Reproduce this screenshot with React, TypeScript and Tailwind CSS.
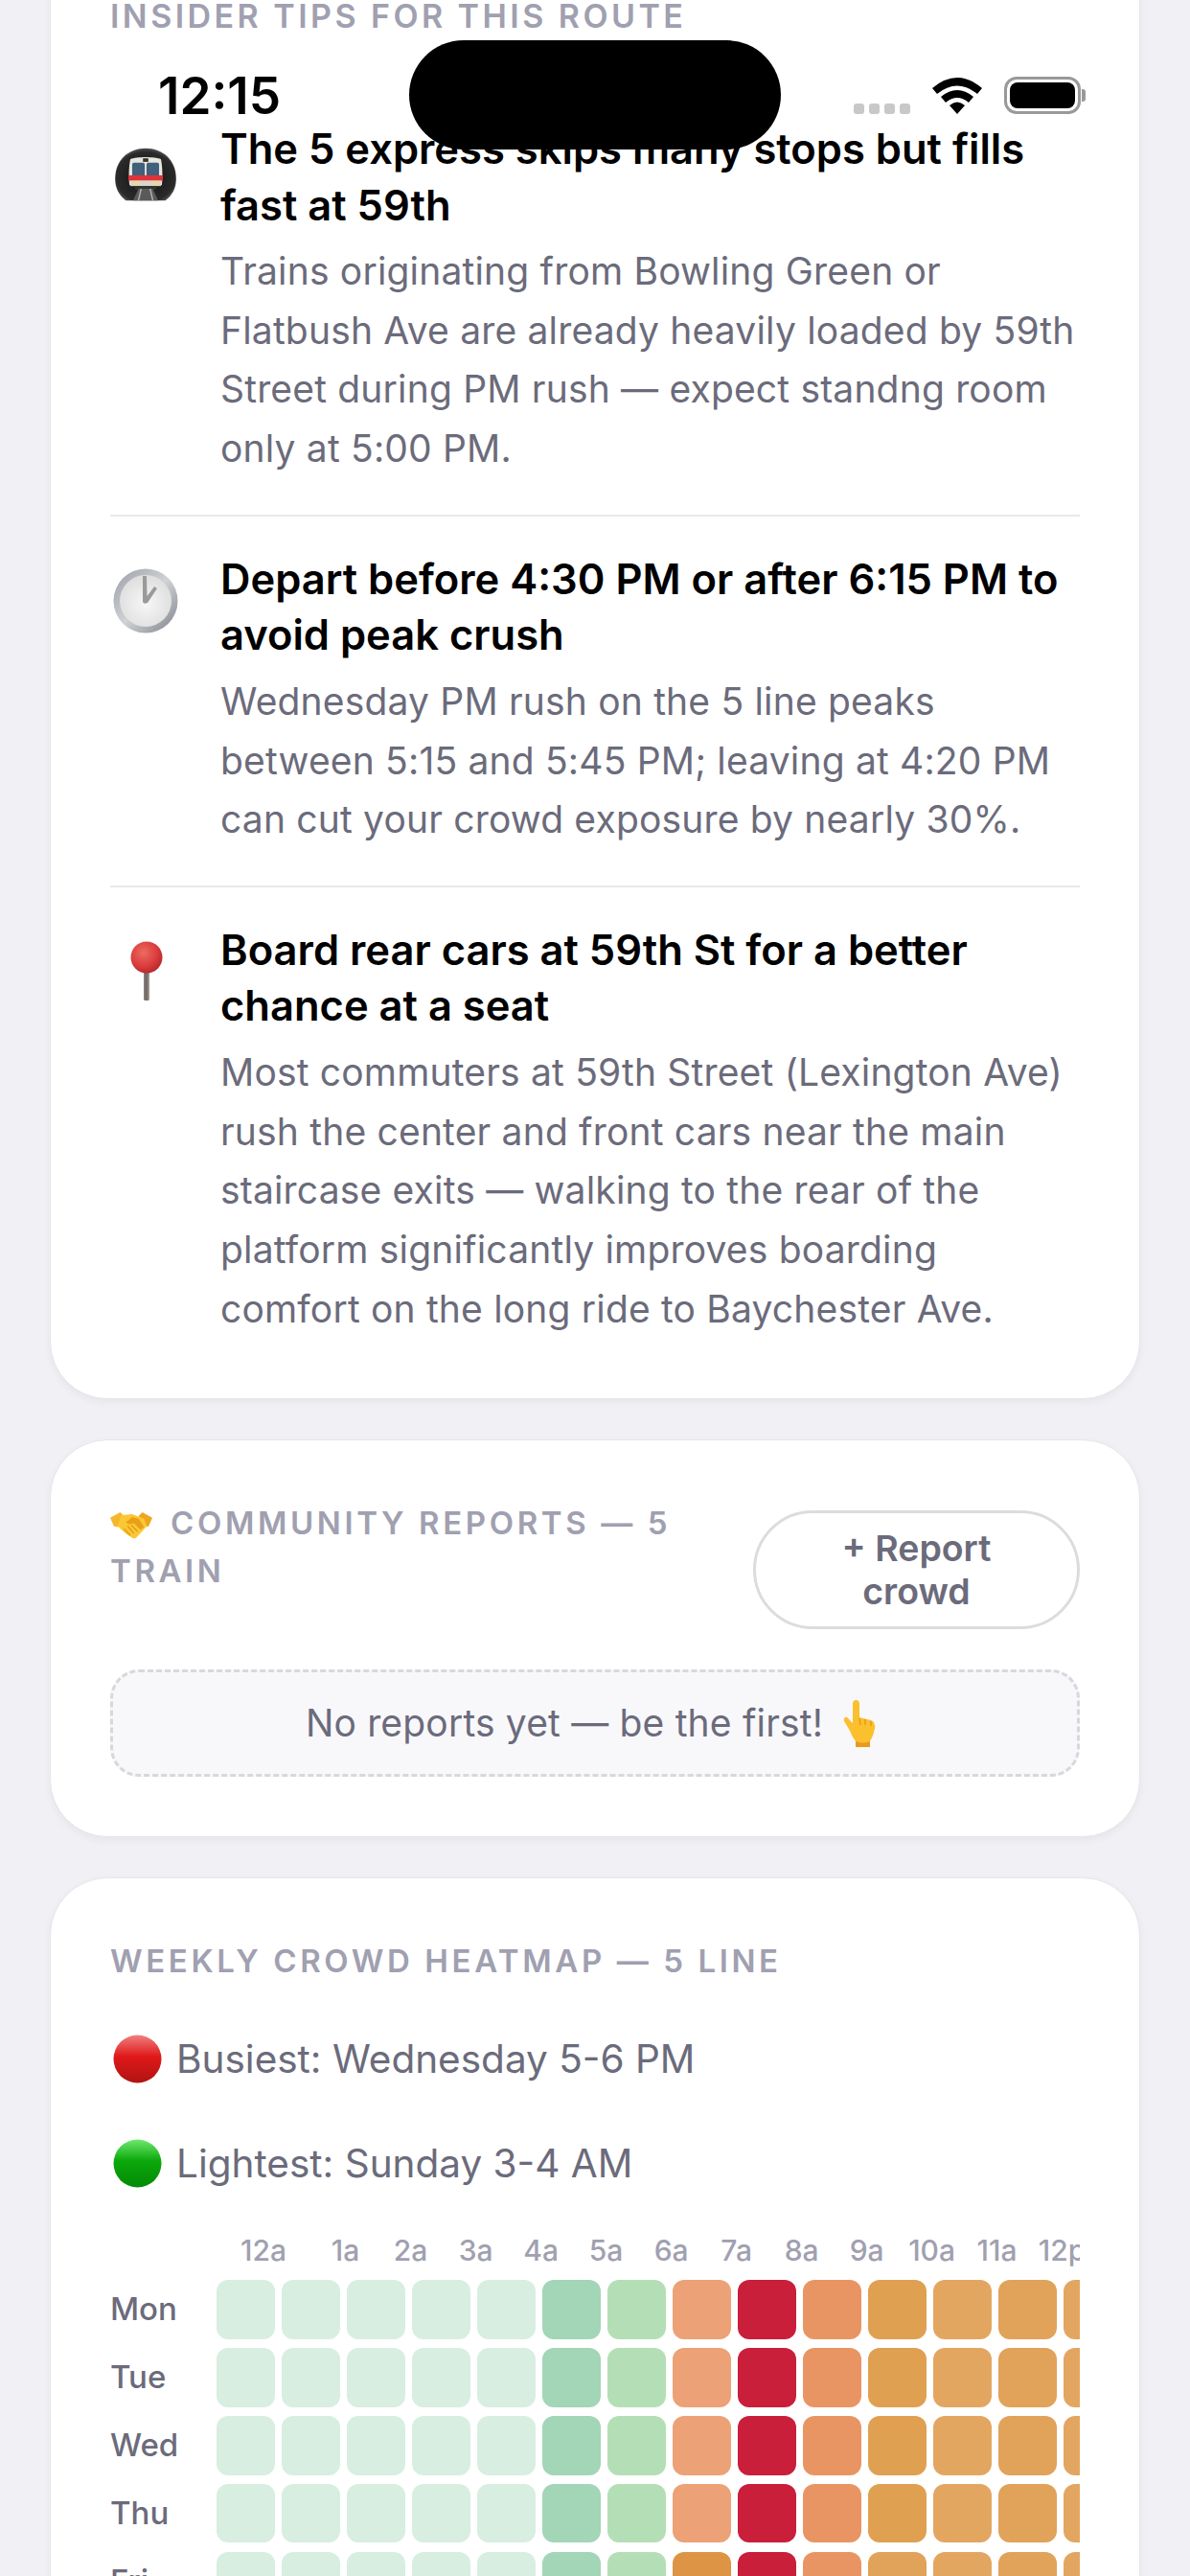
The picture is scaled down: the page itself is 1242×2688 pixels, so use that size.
import React from "react";

const font = { fontFamily: "Inter, 'Noto Sans', sans-serif" };

function TrainEmoji() {
  return (
    <svg width="68" height="58" viewBox="0 0 72 62" className="block">
      <defs>
        <radialGradient id="tun" cx="50%" cy="55%" r="60%">
          <stop offset="0%" stopColor="#111" />
          <stop offset="80%" stopColor="#2a2a2a" />
          <stop offset="100%" stopColor="#6a6a6a" />
        </radialGradient>
      </defs>
      <path d="M2 36 C2 15 17 2 36 2 C55 2 70 15 70 36 C70 46 66 54 58 60 L14 60 C6 54 2 46 2 36 Z" fill="url(#tun)" />
      <path d="M19 14 C26 11 46 11 53 14 C55 22 55 36 54 43 L18 43 C17 36 17 22 19 14 Z" fill="#e8e6e0" />
      <rect x="21" y="18" width="14" height="16" rx="2" fill="#40607c" />
      <rect x="37" y="18" width="14" height="16" rx="2" fill="#40607c" />
      <rect x="33" y="13" width="6" height="4" fill="#3a3324" />
      <rect x="17" y="32" width="38" height="6" fill="#e0323c" />
      <rect x="19" y="38" width="34" height="6" fill="#d9d5c8" />
      <rect x="21" y="39" width="8" height="3" fill="#f2d98a" />
      <rect x="43" y="39" width="8" height="3" fill="#f2d98a" />
      <rect x="24" y="44" width="24" height="4" fill="#333" />
      <path d="M22 60 L28 47 L44 47 L50 60 Z" fill="#5a5a5a" />
      <path d="M28 60 L31 47 M44 60 L41 47" stroke="#b5b5b5" strokeWidth="1.5" />
    </svg>
  );
}

function ClockEmoji() {
  return (
    <svg width="68" height="68" viewBox="0 0 68 68" className="block">
      <defs>
        <linearGradient id="rim" x1="0" y1="0" x2="1" y2="1">
          <stop offset="0%" stopColor="#9a9ea6" />
          <stop offset="50%" stopColor="#d0d2d6" />
          <stop offset="100%" stopColor="#7e828a" />
        </linearGradient>
        <radialGradient id="face" cx="50%" cy="55%" r="55%">
          <stop offset="0%" stopColor="#f7f7f7" />
          <stop offset="100%" stopColor="#dedede" />
        </radialGradient>
      </defs>
      <circle cx="34" cy="34" r="33.5" fill="url(#rim)" />
      <circle cx="34" cy="34" r="27" fill="url(#face)" />
      <path d="M31 8 L35 8 L35.5 29 L43 19 L46 21 L36 36 Q32 38 31 35 Z" fill="#9a9a9a" />
    </svg>
  );
}

function PinEmoji() {
  return (
    <svg width="34" height="62" viewBox="0 0 34 62" className="block">
      <defs>
        <radialGradient id="ball" cx="40%" cy="35%" r="65%">
          <stop offset="0%" stopColor="#ec6b62" />
          <stop offset="70%" stopColor="#d93a3a" />
          <stop offset="100%" stopColor="#b92a2e" />
        </radialGradient>
        <linearGradient id="pin" x1="0" y1="0" x2="1" y2="0">
          <stop offset="0%" stopColor="#8a8480" />
          <stop offset="50%" stopColor="#6c6460" />
          <stop offset="100%" stopColor="#a8a4a0" />
        </linearGradient>
      </defs>
      <rect x="14" y="30" width="6" height="32" rx="1.5" fill="url(#pin)" />
      <circle cx="17" cy="17" r="16.5" fill="url(#ball)" />
    </svg>
  );
}

function HandshakeEmoji() {
  return (
    <svg width="44" height="29" viewBox="0 0 46 30" className="block">
      <path d="M0 7 L11 1 L15 5 L8 17 L4 16 Z" fill="#f6b62c" />
      <path d="M46 7 L35 1 L31 5 L38 17 L42 16 Z" fill="#eea61e" />
      <path d="M12 4 L24 3 L37 8 L40 16 L28 29 Q25 30 23 28 L18 25 L8 16 Z" fill="#fcc734" />
      <path d="M17 12 L24 6 L31 8 L37 17 L33 20 L26 13 L21 14 Z" fill="#e9a017" />
      <path d="M15 19 L22 26 M19 16 L26 24 M23 15 L30 22" stroke="#e09a18" strokeWidth="1.4" fill="none" />
    </svg>
  );
}

function FingerEmoji() {
  return (
    <svg width="38" height="49" viewBox="0 0 38 49" className="block">
      <path d="M11 4 Q11 0 14.5 0 Q18 0 18 4 L18 18 L30 21 Q35 23 34 30 L32 37 Q30 41 29 43 L29 49 L14 49 L14 43 Q10 38 8 32 L2 22 Q1 19 3 18 Q5 17 7 20 L11 24 Z" fill="#fbc02d" />
      <path d="M18 19 L19 26 M24 20 L24 26 M30 22 L30 27" stroke="#e49a18" strokeWidth="1.4" fill="none" />
      <path d="M14 43 Q22 46 29 43 L29 49 L14 49 Z" fill="#e89a1c" />
    </svg>
  );
}

function DotEmoji({ id, from, mid, to }: { id: string; from: string; mid: string; to: string }) {
  return (
    <svg width="51" height="51" viewBox="0 0 51 51" className="block shrink-0">
      <defs>
        <linearGradient id={id} x1="0" y1="0" x2="0" y2="1">
          <stop offset="0%" stopColor={from} />
          <stop offset="45%" stopColor={mid} />
          <stop offset="100%" stopColor={to} />
        </linearGradient>
      </defs>
      <circle cx="25.5" cy="25.5" r="25" fill={`url(#${id})`} />
    </svg>
  );
}

function StatusBar() {
  return (
    <div className="absolute left-0 top-0 w-full h-[160px]">
      <span className="absolute left-[165px] top-[70px] text-[53px] leading-[60px] font-semibold text-black">
        12:15
      </span>
      <div className="absolute left-[427px] top-[42px] w-[388px] h-[114px] rounded-[57px] bg-black" />
      <div className="absolute left-[891px] top-[108px] flex gap-[5px]">
        <div className="w-[11px] h-[11px] rounded-[3px] bg-[#c8c8c8]" />
        <div className="w-[11px] h-[11px] rounded-[3px] bg-[#c8c8c8]" />
        <div className="w-[11px] h-[11px] rounded-[3px] bg-[#c8c8c8]" />
        <div className="w-[11px] h-[11px] rounded-[3px] bg-[#c8c8c8]" />
      </div>
      <svg className="absolute left-[973px] top-[81px]" width="52" height="38" viewBox="0 0 52 38">
        <path d="M0 11 Q26 -11 52 11 L47 17 Q26 0 5 17 Z" fill="#000" />
        <path d="M9 20 Q26 6 43 20 L38 26 Q26 16 14 26 Z" fill="#000" />
        <path d="M18 29 Q26 22 34 29 L26 38 Z" fill="#000" />
      </svg>
      <div className="absolute left-[1048px] top-[80px] w-[80px] h-[39px] rounded-[13px] border-[3px] border-[#999] p-[3px]">
        <div className="w-full h-full rounded-[8px] bg-black" />
      </div>
      <div className="absolute left-[1129px] top-[93px] w-[4px] h-[13px] rounded-r-[3px] bg-[#999]" />
    </div>
  );
}

function Tip({ icon, title, body, last }: { icon: React.ReactNode; title: string; body: string; last?: boolean }) {
  return (
    <div className={last ? "flex" : "flex pb-[38px] mb-[36px] border-b-[2px] border-[#e8e8ec]"}>
      <div className="w-[115px] shrink-0 flex justify-start pl-[3px]">{icon}</div>
      <div className="flex-1">
        <div className="text-[43.5px] leading-[58.5px] font-semibold text-black">{title}</div>
        <div className="mt-[9px] text-[39px] leading-[61.7px] tracking-[0.18px] text-[#6b6b7b]">{body}</div>
      </div>
    </div>
  );
}

const G1 = "#d8eee1";
const G2 = "#a3d5b7";
const G3 = "#b4dfb6";
const P1 = "#eca176";
const R = "#c91f3b";
const P2 = "#e99563";
const O1 = "#e0a052";
const O2 = "#e3a661";
const O3 = "#e1a259";
const O4 = "#dd9445";

const baseRow = [G1, G1, G1, G1, G1, G2, G3, P1, R, P2, O1, O2, O3, O2];
const rows = [
  { day: "Mon", cells: baseRow },
  { day: "Tue", cells: baseRow },
  { day: "Wed", cells: baseRow },
  { day: "Thu", cells: baseRow },
  { day: "Fri", cells: [G1, G1, G1, G1, G1, G2, G3, O4, R, P2, O3, O2, O3, O2] },
];
const hours = ["1a", "2a", "3a", "4a", "5a", "6a", "7a", "8a", "9a", "10a", "11a", "12p"];

function Heatmap() {
  return (
    <div className="overflow-hidden">
      <div className="flex h-[36px] items-center pl-[136px] text-[30px] font-medium text-[#a0a0b0] whitespace-nowrap">
        <div className="w-[75.6px] shrink-0">12a</div>
        {hours.map((h) => (
          <div key={h} className="w-[68px] shrink-0 text-center">
            {h}
          </div>
        ))}
      </div>
      <div className="mt-[13px] flex flex-col gap-[9.3px]">
        {rows.map((r) => (
          <div key={r.day} className="flex items-center">
            <div className="w-[110.5px] shrink-0 text-[33px] font-[550] text-[#6b6b7b]">{r.day}</div>
            <div className="flex gap-[6.5px]">
              {r.cells.map((c, i) => (
                <div key={i} className="w-[61.5px] h-[61.5px] shrink-0 rounded-[12px]" style={{ backgroundColor: c }} />
              ))}
            </div>
          </div>
        ))}
      </div>
    </div>
  );
}

const cardCls = "bg-white rounded-[60px] border border-[#e6e6ea] shadow-[0_3px_9px_rgba(0,0,0,0.05)]";
const headCls = "text-[33px] leading-[40px] font-semibold tracking-[3.6px] text-[#a0a0b0]";

export default function App() {
  return (
    <div className="relative h-[2688px] overflow-hidden bg-[#f0f0f5]" style={font}>
      <div className="flex flex-col gap-[42px] px-[52px] -mt-[66px]">
        <div className={cardCls + " px-[62px] pt-[62px] pb-[63px]"}>
          <div className="text-[34px] leading-[40px] font-semibold tracking-[3.45px] text-[#a0a0b0] mb-[89px]">
            INSIDER TIPS FOR THIS ROUTE
          </div>
          <Tip
            icon={
              <div className="pt-[27px]">
                <TrainEmoji />
              </div>
            }
            title="The 5 express skips many stops but fills fast at 59th"
            body="Trains originating from Bowling Green or Flatbush Ave are already heavily loaded by 59th Street during PM rush — expect standng room only at 5:00 PM."
          />
          <Tip
            icon={
              <div className="pt-[18px]">
                <ClockEmoji />
              </div>
            }
            title="Depart before 4:30 PM or after 6:15 PM to avoid peak crush"
            body="Wednesday PM rush on the 5 line peaks between 5:15 and 5:45 PM; leaving at 4:20 PM can cut your crowd exposure by nearly 30%."
          />
          <Tip
            last
            icon={
              <div className="pl-[18px] pt-[20px]">
                <PinEmoji />
              </div>
            }
            title="Board rear cars at 59th St for a better chance at a seat"
            body="Most commuters at 59th Street (Lexington Ave) rush the center and front cars near the main staircase exits — walking to the rear of the platform significantly improves boarding comfort on the long ride to Baychester Ave."
          />
        </div>

        <div className={cardCls + " px-[62px] pt-[61px] pb-[62px]"}>
          <div className="flex items-start gap-[40px]">
            <div className="flex-1 text-[33px] leading-[50px] font-semibold tracking-[3.6px] text-[#a0a0b0]">
              <span className="inline-block align-[-5px] mr-[19px]">
                <HandshakeEmoji />
              </span>
              COMMUNITY REPORTS — 5 TRAIN
            </div>
            <button className="mt-[12px] w-[341px] h-[124px] shrink-0 rounded-full border-[3px] border-[#dcdcdc] px-[60px] text-[37.5px] leading-[45px] font-semibold text-[#6b6b7b]">
              + Report crowd
            </button>
          </div>
          <div className="mt-[42px] h-[112px] rounded-[30px] border-[3px] border-dashed border-[#d8d8dc] bg-[#f8f8fb] flex items-center justify-center text-[39px] tracking-[0.18px] text-[#6b6b7b]">
            No reports yet — be the first!
            <span className="ml-[20px] mr-[6px]">
              <FingerEmoji />
            </span>
          </div>
        </div>

        <div className={cardCls + " px-[62px] pt-[66px] pb-[60px]"}>
          <div className={headCls}>WEEKLY CROWD HEATMAP — 5 LINE</div>
          <div className="mt-[57px] flex items-center gap-[15px] text-[40.5px] leading-[50px] text-[#6b6b7b]">
            <div className="pl-[3px]">
              <DotEmoji id="red" from="#f08080" mid="#e01818" to="#b01414" />
            </div>
            Busiest: Wednesday 5-6 PM
          </div>
          <div className="mt-[58px] flex items-center gap-[15px] text-[40.5px] leading-[50px] text-[#6b6b7b]">
            <div className="pl-[3px]">
              <DotEmoji id="green" from="#6fe86f" mid="#0aa80a" to="#058a05" />
            </div>
            Lightest: Sunday 3-4 AM
          </div>
          <div className="mt-[47px]">
            <Heatmap />
          </div>
        </div>
      </div>
      <StatusBar />
    </div>
  );
}
